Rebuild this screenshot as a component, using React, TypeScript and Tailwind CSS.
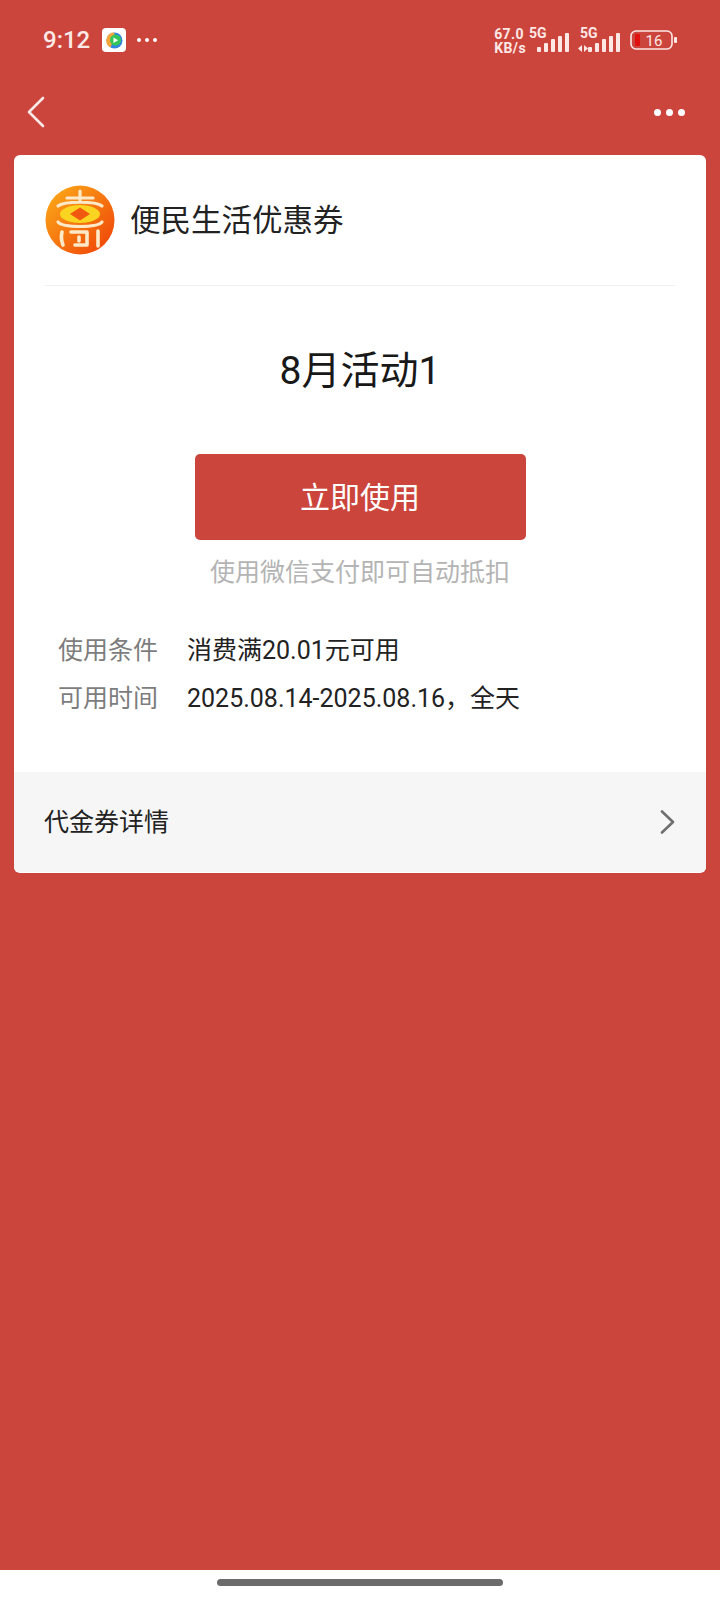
const font = { fontFamily: "Roboto, 'Noto Sans CJK SC', sans-serif" };

function StatusBar() {
  return (
    <div className="flex h-[80px] items-center justify-between pl-[43px] pr-[43px] text-white">
      <div className="flex items-center">
        <span className="text-[24px] font-medium leading-none text-[#fbe9e7]">9:12</span>
        <div className="ml-[12px] flex h-[24px] w-[24px] items-center justify-center rounded-[4px] bg-white">
          <svg width="17" height="17" viewBox="0 0 17 17">
            <circle cx="8.500" cy="8.500" r="8" fill="#2f86e0" />
            <path d="M8.500.5a8 8 0 0 0-4 15l3-7.500z" fill="#f7a63a" />
            <circle cx="9.500" cy="8" r="5.500" fill="#35c65a" />
            <path d="M7.500 5.500v5.500l4.500-2.700z" fill="#fff" />
          </svg>
        </div>
        <div className="ml-[11px] flex gap-[4px]">
          <span className="h-[4px] w-[4px] rounded-full bg-white" />
          <span className="h-[4px] w-[4px] rounded-full bg-white" />
          <span className="h-[4px] w-[4px] rounded-full bg-white" />
        </div>
      </div>
      <div className="flex items-center text-[#fde8e6]">
        <div className="mt-[2px] text-[14px] font-bold leading-[14px] tracking-[0.4px]">
          <div>67.0</div>
          <div>KB/s</div>
        </div>
        <Signal className="ml-[3px]" />
        <Signal className="ml-[9px]" arrows />
        <svg className="ml-[10px]" width="47" height="22" viewBox="0 0 47 22">
          <rect x="1" y="2" width="41" height="18" rx="5" fill="none" stroke="#fde8e6" strokeWidth="1.600" />
          <rect x="5" y="5" width="5" height="12" rx="1" fill="#e01010" />
          <rect x="44" y="8" width="3" height="6" rx="1" fill="#fde8e6" />
          <text x="24" y="16.500" textAnchor="middle" fontSize="15" fill="#fde8e6" fontFamily="Roboto, sans-serif">16</text>
        </svg>
      </div>
    </div>
  );
}

function Signal({ className, arrows }: { className?: string; arrows?: boolean }) {
  const bars = [5, 9, 13, 16, 19];
  return (
    <div className={`relative flex h-[24px] items-end justify-end gap-[3px] ${arrows ? "w-[42px]" : "w-[40px]"} ${className ?? ""}`}>
      <span className={`absolute top-[-2px] text-[14px] font-bold leading-none ${arrows ? "left-[2px]" : "left-0"}`}>5G</span>
      {arrows && (
        <svg className="absolute bottom-0 left-0" width="10" height="7" viewBox="0 0 10 7">
          <path d="M0 3.500L4 0v7zM6 0l4 3.500L6 7z" fill="#fde8e6" />
        </svg>
      )}
      {bars.map((h) => (
        <span key={h} className="w-[4px] rounded-[1px] bg-[#fde8e6]" style={{ height: h }} />
      ))}
    </div>
  );
}

function Logo() {
  return (
    <svg width="70" height="70" viewBox="0 0 70 70" className="shrink-0">
      <defs>
        <linearGradient id="logoBg" x1="0" y1="0" x2="1" y2="1">
          <stop offset="0" stopColor="#fdb01a" />
          <stop offset="1" stopColor="#ee3d06" />
        </linearGradient>
      </defs>
      <circle cx="35" cy="35" r="34.500" fill="url(#logoBg)" />
      <path d="M35 6v9M22 13h26M13 21c6-5 38-5 44 0" stroke="#fde9c8" strokeWidth="3.200" strokeLinecap="round" fill="none" />
      <ellipse cx="35" cy="29" rx="20" ry="9" fill="#fbd321" />
      <path d="M35 22.500l10 6.500-10 6.500-10-6.500z" fill="#f0590f" />
      <path d="M13 37c5 6 39 6 44 0" stroke="#fde9c8" strokeWidth="3.200" strokeLinecap="round" fill="none" />
      <path d="M17 47c-1 4-1 8 1 13M26 47h16v13H30M34 52v4M53 46v15" stroke="#fde9c8" strokeWidth="3.600" strokeLinecap="round" strokeLinejoin="round" fill="none" />
    </svg>
  );
}

export default function App() {
  return (
    <div className="flex h-[1600px] w-[720px] flex-col overflow-hidden bg-[#cb453d]" style={font}>
      <StatusBar />
      <div className="flex h-[75px] items-center justify-between pb-[11px] pl-[26px] pr-[35px]">
        <svg width="20" height="32" viewBox="0 0 20 32" fill="none">
          <path d="M17 2L3 16l14 14" stroke="#fbe9e7" strokeWidth="2.600" strokeLinecap="round" strokeLinejoin="round" />
        </svg>
        <div className="flex gap-[5px]">
          <span className="h-[7px] w-[7px] rounded-full bg-white" />
          <span className="h-[7px] w-[7px] rounded-full bg-white" />
          <span className="h-[7px] w-[7px] rounded-full bg-white" />
        </div>
      </div>

      <div className="mx-[14px] h-[718px] overflow-hidden rounded-[6px] bg-white">
        <div className="mx-[30px] flex h-[131px] items-center gap-[15px] border-b border-[#f1f1f1] pl-[1px]">
          <Logo />
          <span className="pt-[3px] text-[30.500px] leading-none text-[#222222]">便民生活优惠券</span>
        </div>
        <div className="mt-[55px] text-center text-[39px] leading-[60px] text-[#181818]">8月活动1</div>
        <div className="mx-auto mt-[53px] flex h-[86px] w-[331px] items-center justify-center rounded-[5px] bg-[#cb453d] text-[30px] text-white">
          立即使用
        </div>
        <div className="mt-[15px] text-center text-[25px] leading-[36px] text-[#b4b4b4]">使用微信支付即可自动抵扣</div>
        <div className="mt-[42px] space-y-[12px] px-[44px] text-[25px] leading-[36px]">
          <div className="flex">
            <span className="w-[129px] text-[#7d7d7d]">使用条件</span>
            <span className="text-[#222222]">消费满20.01元可用</span>
          </div>
          <div className="flex">
            <span className="w-[129px] text-[#7d7d7d]">可用时间</span>
            <span className="text-[#222222]">2025.08.14-2025.08.16，全天</span>
          </div>
        </div>
        <div className="mt-[55px] flex h-[100px] items-center justify-between bg-[#f6f6f6] pl-[30px] pr-[31px]">
          <span className="pt-[2px] text-[25px] text-[#222222]">代金券详情</span>
          <svg width="15" height="24" viewBox="0 0 15 24" fill="none">
            <path d="M2 1.500L13 12 2 22.500" stroke="#6f6f6f" strokeWidth="2.600" strokeLinecap="round" strokeLinejoin="round" />
          </svg>
        </div>
      </div>

      <div className="mt-auto flex h-[30px] justify-center bg-white pt-[9px]">
        <div className="h-[7px] w-[286px] rounded-full bg-[#6b6b6b]" />
      </div>
    </div>
  );
}
